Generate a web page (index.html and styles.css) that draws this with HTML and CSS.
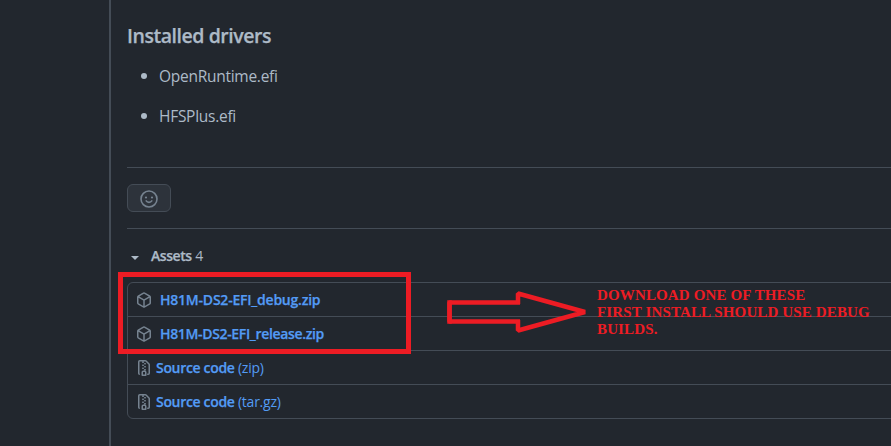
FILE: index.html
```html
<!DOCTYPE html>
<html lang="en">
<head>
<meta charset="utf-8">
<title>Release assets</title>
<link rel="stylesheet" href="styles.css">
</head>
<body>
<svg width="0" height="0" class="defs" aria-hidden="true">
  <symbol id="package" viewBox="0 0 16 16"><path fill-rule="evenodd" d="M8.878.392a1.75 1.75 0 0 0-1.756 0l-5.25 3.045A1.75 1.75 0 0 0 1 4.951v6.098c0 .624.332 1.2.872 1.514l5.25 3.045a1.75 1.75 0 0 0 1.756 0l5.25-3.045c.54-.313.872-.89.872-1.514V4.951c0-.624-.332-1.2-.872-1.514L8.878.392zM7.875 1.69a.25.25 0 0 1 .25 0l4.63 2.685L8 7.133 3.245 4.375l4.63-2.685zM2.5 5.677v5.372c0 .09.047.171.125.216l4.625 2.683V8.432L2.5 5.677zm6.25 8.271 4.625-2.683a.25.25 0 0 0 .125-.216V5.677L8.75 8.432v5.516z"/></symbol>
  <symbol id="file-zip" viewBox="0 0 16 16"><path fill-rule="evenodd" d="M3.5 1.75a.25.25 0 0 1 .25-.25h3a.75.75 0 0 0 0 1.5h.5a.75.75 0 0 0 0-1.5h2.086a.25.25 0 0 1 .177.073l2.914 2.914a.25.25 0 0 1 .073.177v8.586a.25.25 0 0 1-.25.25h-.5a.75.75 0 0 0 0 1.5h.5A1.75 1.75 0 0 0 14 13.25V4.664c0-.464-.184-.909-.513-1.237L10.573.513A1.75 1.75 0 0 0 9.336 0H3.75A1.75 1.75 0 0 0 2 1.75v11.5c0 .649.353 1.214.874 1.515a.75.75 0 1 0 .752-1.298.25.25 0 0 1-.126-.217V1.75zM8.75 3a.75.75 0 0 0 0 1.5h.5a.75.75 0 0 0 0-1.5h-.5zM6 5.25a.75.75 0 0 1 .75-.75h.5a.75.75 0 0 1 0 1.5h-.5A.75.75 0 0 1 6 5.25zm2 1.5A.75.75 0 0 1 8.75 6h.5a.75.75 0 0 1 0 1.5h-.5A.75.75 0 0 1 8 6.75zm-1.25.75a.75.75 0 0 0 0 1.5h.5a.75.75 0 0 0 0-1.5h-.5zM8 9.75A.75.75 0 0 1 8.75 9h.5a.75.75 0 0 1 0 1.5h-.5A.75.75 0 0 1 8 9.75zm-.75.75a1.75 1.75 0 0 0-1.75 1.75v3c0 .414.336.75.75.75h3.5a.75.75 0 0 0 .75-.75v-3a1.75 1.75 0 0 0-1.75-1.75h-1.5zM7 12.25a.25.25 0 0 1 .25-.25h1.5a.25.25 0 0 1 .25.25v2.25H7v-2.25z"/></symbol>
</svg>
<main class="release">
  <h2 class="title">Installed drivers</h2>
  <ul class="drivers">
    <li><span>OpenRuntime.efi</span></li>
    <li><span>HFSPlus.efi</span></li>
  </ul>
  <section class="reactions">
    <button class="react" aria-label="Add reaction">
      <svg width="18" height="18" viewBox="0 0 18 18" fill="none" stroke="currentColor" stroke-width="1.6">
        <circle cx="9" cy="9" r="8"/><path d="M6.2 10.9c1.2 1.9 4.4 1.9 5.6 0" stroke-linecap="round"/>
        <circle cx="6" cy="7.5" r="1.1" fill="currentColor" stroke="none"/><circle cx="12" cy="7.5" r="1.1" fill="currentColor" stroke="none"/>
      </svg>
    </button>
  </section>
  <div class="summary"><i class="caret"></i><span class="assets-label"><b>Assets</b> 4</span></div>
  <ul class="assets">
    <li><svg class="icon"><use href="#package"/></svg><a class="file debug">H81M-DS2-EFI_debug.zip</a></li>
    <li><svg class="icon"><use href="#package"/></svg><a class="file">H81M-DS2-EFI_release.zip</a></li>
    <li><svg class="icon"><use href="#file-zip"/></svg><a class="source"><b>Source code</b> (zip)</a></li>
    <li><svg class="icon"><use href="#file-zip"/></svg><a class="source"><b>Source code</b> (tar.gz)</a></li>
  </ul>
</main>
<div class="highlight"></div>
<svg class="arrow" width="142" height="46" viewBox="0 0 142 46" fill="none" stroke="#ed1c24" stroke-width="4.5"><path d="M73 12.500H2.500V31.500H73M71 14V3.500L138 22L71 40.500V30" stroke-linejoin="bevel"/><path d="M2.500 10.250V33.750"/></svg>
<p class="note">DOWNLOAD ONE OF THESE<br>FIRST INSTALL SHOULD USE DEBUG<br>BUILDS.</p>
</body>
</html>
```
FILE: styles.css
```css
* { box-sizing: border-box; }
body {
  margin: 0;
  height: 446px;
  overflow: hidden;
  position: relative;
  background: #22272e;
  color: #adbac7;
  font: 14px/20px "Open Sans", "Noto Sans", sans-serif;
}
.defs { position: absolute; }
b { font-weight: 600; }
ul { list-style: none; margin: 0; padding: 0; }
.release {
  height: 446px;
  margin-left: 109px;
  padding: 23px 0 0 16px;
  border-left: 2px solid #444c56;
}
.title { margin: 0; font-size: 19.5px; line-height: 25px; font-weight: 600; letter-spacing: -.45px; -webkit-text-stroke: .25px; }
.drivers { padding: 16px 0 0 32px; height: 119px; font-size: 15.5px; line-height: 24px; }
.drivers li { display: flex; align-items: center; margin-bottom: 16px; letter-spacing: -.27px; }
.drivers li::before { content: ""; width: 6px; height: 6px; margin: 0 12px 0 -18px; border-radius: 50%; background: #adbac7; }
.reactions { height: 62px; padding-top: 16px; border-top: 1px solid #444c56; border-bottom: 1px solid #444c56; }
.react {
  display: flex; align-items: center; justify-content: center;
  width: 44px; height: 28px; padding: 2px 0 0;
  background: #2d333b; border: 1px solid #444c56; border-radius: 6px; color: #768390;
}
.summary { display: flex; align-items: center; height: 53px; padding: 1px 0 0 4px; }
.caret { width: 0; height: 0; margin-right: 12px; margin-top: 4px; border: 4px solid transparent; border-top-color: #adbac7; border-bottom: 0; }
.assets-label { letter-spacing: -.45px; word-spacing: .5px; }
.assets { width: 780px; border: 1px solid #444c56; border-radius: 6px; }
.assets li { display: flex; align-items: center; height: 34px; padding-left: 8px; border-top: 1px solid #444c56; }
.assets li:first-child { height: 33px; border-top: 0; }
.icon { width: 16px; height: 16px; fill: #768390; }
.file, .source { color: #539bf5; white-space: nowrap; }
.file { margin-left: 8px; font-weight: 600; letter-spacing: -.34px; }
.debug { letter-spacing: -.22px; }
.file, b { -webkit-text-stroke: .25px; }
.source { margin-left: 4px; letter-spacing: -.25px; }
.source b { letter-spacing: -.32px; }
.highlight { position: absolute; left: 118px; top: 272px; width: 293px; height: 82px; border: 5px solid #ed1c24; }
.arrow { position: absolute; left: 447px; top: 290px; }
.note { position: absolute; left: 597px; top: 287px; margin: 0; color: #ed1c24; font: bold 15px/17px "Liberation Serif", serif; letter-spacing: .14px; white-space: nowrap; }
```
